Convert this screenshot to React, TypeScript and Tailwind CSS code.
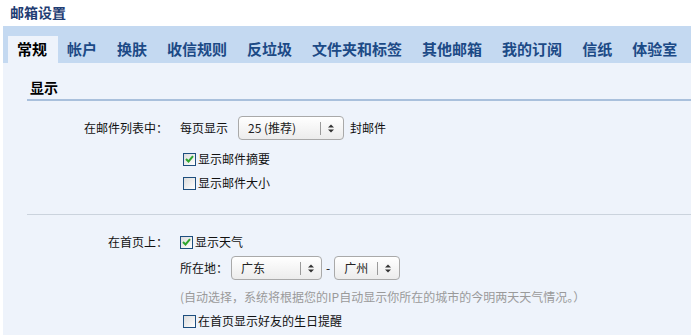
import { useState } from "react";

const TABS = ["常规", "帐户", "换肤", "收信规则", "反垃圾", "文件夹和标签", "其他邮箱", "我的订阅", "信纸", "体验室"];

const FONT = { fontFamily: '"Noto Sans CJK SC", "Liberation Sans", sans-serif' };

function Arrows() {
  return (
    <svg width="6" height="9" viewBox="0 0 6 9" className="shrink-0">
      <path d="M0 3.5 L3 0.5 L6 3.5 Z" fill="#333" />
      <path d="M0 5.5 L3 8.5 L6 5.5 Z" fill="#333" />
    </svg>
  );
}

function Select({ value, width, divider }: { value: string; width: number; divider: number }) {
  return (
    <div
      className="relative flex h-[24px] items-center rounded-[4px] border border-[#a9a9a9] bg-gradient-to-b from-white to-[#ececec] text-[12px] text-[#222]"
      style={{ width }}
    >
      <span className="pl-[9px] whitespace-nowrap">{value}</span>
      <div className="absolute top-[5px] h-[13px] w-px bg-[#9a9a9a]" style={{ left: divider }} />
      <div className="absolute top-[7px]" style={{ left: divider + 8 }}>
        <Arrows />
      </div>
    </div>
  );
}

function Checkbox({ checked, label, onToggle }: { checked: boolean; label: string; onToggle: () => void }) {
  return (
    <label className="flex cursor-pointer items-center gap-[2px] pl-[3px] text-[12px] text-[#111]" onClick={onToggle}>
      <span className="flex h-[13px] w-[13px] items-center justify-center border border-[#1d4e7e] bg-gradient-to-br from-[#dcdcdc] to-white">
        {checked && (
          <svg width="9" height="8" viewBox="0 0 9 8">
            <path d="M1 4 L3.5 6.5 L8 1.2" fill="none" stroke="#2ea52e" strokeWidth="2" />
          </svg>
        )}
      </span>
      <span>{label}</span>
    </label>
  );
}

export default function App() {
  const [checks, setChecks] = useState({ summary: true, size: false, weather: true, birthday: false });
  const toggle = (k: keyof typeof checks) => setChecks((p) => ({ ...p, [k]: !p[k] }));

  return (
    <div className="h-[335px] w-[691px] overflow-hidden bg-white" style={FONT}>
      {/* Title */}
      <div className="flex h-[26px] items-center pl-[10px] pb-[2px] text-[14px] font-bold text-[#1f3d73]">邮箱设置</div>

      <div className="ml-[3px]">
        {/* Tabs */}
        <div className="flex h-[37px] items-end bg-[#c4d9f1] pl-[5px]">
          {TABS.map((t, i) => (
            <div
              key={t}
              className={
                "flex h-[27px] items-center pl-[9px] pr-[11px] text-[15px] font-bold whitespace-nowrap " +
                (i === 0 ? "bg-[#eef3fb] text-black" : "text-[#1c4a86]")
              }
            >
              {t}
            </div>
          ))}
        </div>

        {/* Body */}
        <div className="bg-[#eef3fb] pb-[20px]">
          <div className="ml-[24px]">
            <div className="h-[36px] pt-[17px] pl-[3px] text-[14px] leading-[14px] font-bold text-black">显示</div>
            <div className="h-[2px] bg-[#a9c0dc]" />
          </div>

          {/* Mail list */}
          <div className="pt-[14px] text-[12px]">
            <div className="flex h-[25px] items-center">
              <div className="w-[165px] text-right text-[#111]">在邮件列表中：</div>
              <div className="ml-[12px] flex items-center">
                <span className="text-[#111]">每页显示</span>
                <div className="ml-[10px]">
                  <Select value="25 (推荐)" width={106} divider={81} />
                </div>
                <span className="ml-[6px] text-[#111]">封邮件</span>
              </div>
            </div>
            <div className="ml-[177px]">
              <div className="flex h-[28px] items-end">
                <Checkbox checked={checks.summary} label="显示邮件摘要" onToggle={() => toggle("summary")} />
              </div>
              <div className="flex h-[24px] items-end">
                <Checkbox checked={checks.size} label="显示邮件大小" onToggle={() => toggle("size")} />
              </div>
            </div>
          </div>

          <div className="mt-[22px] ml-[24px] h-px bg-[#cbd3dd]" />

          {/* Home page */}
          <div className="pt-[15px] text-[12px]">
            <div className="flex h-[24px] items-center">
              <div className="w-[165px] text-right text-[#111]">在首页上：</div>
              <div className="ml-[9px]">
                <Checkbox checked={checks.weather} label="显示天气" onToggle={() => toggle("weather")} />
              </div>
            </div>
            <div className="ml-[177px]">
              <div className="mt-[2px] flex h-[24px] items-center">
                <span className="text-[#111]">所在地：</span>
                <div className="ml-[3px]">
                  <Select value="广东" width={91} divider={68} />
                </div>
                <span className="mx-[4px] text-[#111]">-</span>
                <Select value="广州" width={66} divider={42} />
              </div>
              <div className="flex h-[28px] items-end pb-[2px] text-[#9a9a9a]">
                (自动选择，系统将根据您的IP自动显示你所在的城市的今明两天天气情况。）
              </div>
              <div className="flex h-[22px] items-end">
                <Checkbox checked={checks.birthday} label="在首页显示好友的生日提醒" onToggle={() => toggle("birthday")} />
              </div>
            </div>
          </div>
        </div>
      </div>
    </div>
  );
}
